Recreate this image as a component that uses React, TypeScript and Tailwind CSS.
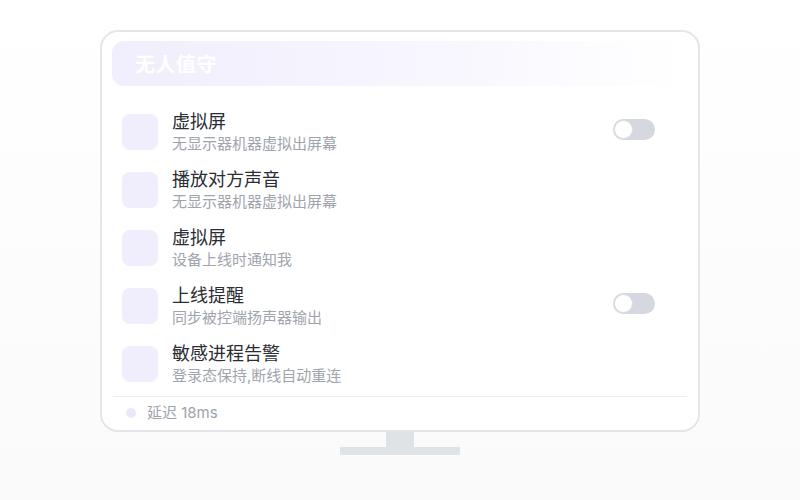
const rows = [
  { title: "虚拟屏", desc: "无显示器机器虚拟出屏幕", toggle: true },
  { title: "播放对方声音", desc: "无显示器机器虚拟出屏幕", toggle: false },
  { title: "虚拟屏", desc: "设备上线时通知我", toggle: false },
  { title: "上线提醒", desc: "同步被控端扬声器输出", toggle: true },
  { title: "敏感进程告警", desc: "登录态保持,断线自动重连", toggle: false },
];

const Toggle = () => (
  <div className="w-[42px] h-[21px] rounded-full bg-[#d5d8de] p-px flex items-center">
    <div className="w-[19px] h-[19px] rounded-full bg-white border border-[#dcdfe4]" />
  </div>
);

export default function App() {
  return (
    <div
      className="w-[800px] h-[500px] bg-gradient-to-b from-white to-[#fafafb] flex flex-col items-center pt-[30px]"
      style={{ fontFamily: "Inter, 'Noto Sans CJK SC', sans-serif" }}
    >
      <div className="w-[600px] h-[402px] border-2 border-[#e4e6ea] rounded-[18px] bg-white px-[10px] pt-[9px] flex flex-col">
        <div className="h-[45px] rounded-xl bg-gradient-to-r from-[#f1eefd] via-[#f7f5fe] to-white flex items-center px-[23px] pt-[3px]">
          <span className="text-white text-[20px] font-bold tracking-[0.5px]">无人值守</span>
        </div>

        <div className="mt-[24px] flex flex-col gap-[14px]">
          {rows.map((r, i) => (
            <div key={i} className="h-[44px] flex items-center pl-[10px] pr-[33px]">
              <div className="w-[36px] h-[36px] rounded-lg bg-[#f0edfc]" />
              <div className="ml-[14px] flex-1 flex flex-col">
                <span className="text-[18px] leading-[24px] text-[#2a2d34]">{r.title}</span>
                <span className="text-[15px] leading-[20px] text-[#a0a4ad]">{r.desc}</span>
              </div>
              {r.toggle && (
                <div className="-mt-[5px]">
                  <Toggle />
                </div>
              )}
            </div>
          ))}
        </div>

        <div className="mt-[10px] mx-px h-px bg-[#eeeff2]" />

        <div className="pt-[6px] h-[26px] flex items-center pl-[14px] gap-[11px]">
          <div className="w-[10px] h-[10px] rounded-full bg-[#ebe8fb]" />
          <span className="text-[15px] leading-[20px] text-[#9ea2ab]">延迟 18ms</span>
        </div>
      </div>

      <div className="w-[28px] h-[15px] bg-[#dfe2e6]" />
      <div className="w-[120px] h-[8px] bg-[#dfe2e6]" />
    </div>
  );
}
